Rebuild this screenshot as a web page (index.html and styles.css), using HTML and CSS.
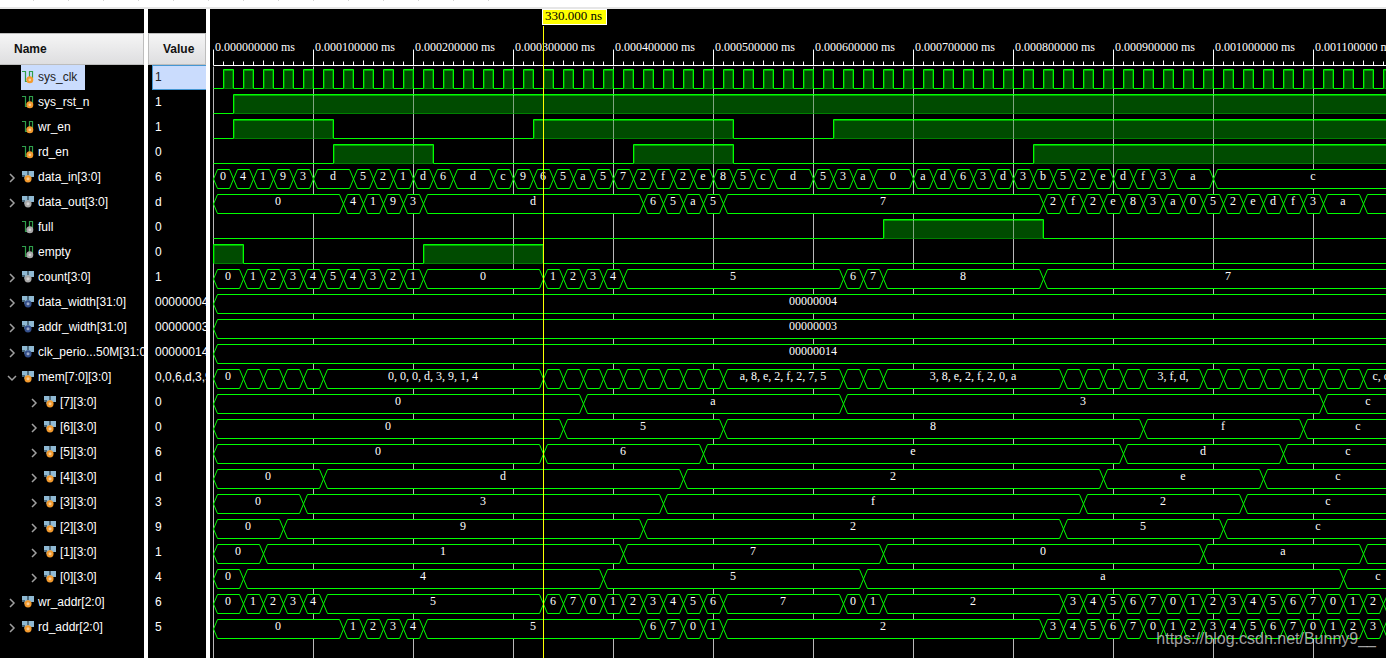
FILE: index.html
```html
<!DOCTYPE html>
<html lang="en">
<head>
<meta charset="utf-8">
<title>Waveform viewer</title>
<link rel="stylesheet" href="styles.css">
</head>
<body>
<svg class="defs" aria-hidden="true">
  <symbol id="bit" viewBox="0 0 14 14">
    <path d="M1 1.500H4.500V11.500H8.500V1.500H11.500V8" fill="none" stroke="#2f9e4b" stroke-width="1.200"/>
    <circle cx="8.800" cy="9.800" r="3.500" fill="currentColor"/>
    <circle cx="8.800" cy="9.800" r="1.400" fill="#fff" opacity=".5"/>
  </symbol>
  <symbol id="bus" viewBox="0 0 14 14">
    <path d="M1 1H6V3H8V1H13V7H10V9H4V7H1Z" fill="#8fb9d3"/>
    <path d="M1 5H4V9H3V7H1ZM6 1H8V5H6Z" fill="#4d6a7c"/>
    <circle cx="7" cy="8.800" r="3.600" fill="currentColor"/>
    <circle cx="7" cy="8.800" r="1.500" fill="#fff" opacity=".5"/>
  </symbol>
</svg>
<div class="viewer">
  <div class="toolbar-edge"></div>
  <main class="panels">
    <section class="column names">
      <h2 class="column-title">Name</h2>
      <div id="names"></div>
    </section>
    <section class="column values">
      <h2 class="column-title">Value</h2>
      <div id="values"></div>
    </section>
    <section class="wave">
      <svg id="wave" class="wave-canvas" role="img" aria-label="Signal waveforms"></svg>
      <span class="cursor-label">330.000 ns</span>
      <span class="watermark">https://blog.csdn.net/Bunny9__</span>
    </section>
  </main>
</div>
<script src="wave.js"></script>
</body>
</html>
```
FILE: styles.css
```css
* {
  box-sizing: border-box;
}

body {
  margin: 0;
  background: #000;
  color: #fff;
  font-family: "Liberation Sans", Arial, sans-serif;
  font-size: 12px;
}

.defs {
  position: absolute;
  width: 0;
  height: 0;
}

.viewer {
  display: flex;
  flex-direction: column;
  height: 100vh;
  overflow: hidden;
}

.toolbar-edge {
  flex: none;
  height: 9px;
  border-bottom: 2px solid #e6e6e6;
  background: repeating-linear-gradient(90deg, transparent 0 33px, #d4d4d4 33px 34px, transparent 34px 35px) 0 0 / 490px 1px no-repeat #fff;
}

.panels {
  display: flex;
  flex: 1;
  min-height: 0;
}

.column {
  flex: none;
  padding-top: 24px;
  border-right: 4px solid #fff;
  overflow: hidden;
}

.names {
  width: 148px;
}

.values {
  width: 62px;
}

.column-title {
  height: 32px;
  margin: 0;
  padding-left: 14px;
  border: 1px solid #bdbdbd;
  border-left: 0;
  background: linear-gradient(#f5f5f5, #dedee0);
  color: #111;
  font-size: 12px;
  line-height: 30px;
}

.values .column-title {
  border-left: 1px solid #bdbdbd;
}

.row {
  display: flex;
  align-items: center;
  height: 25px;
  padding-left: 4px;
  white-space: nowrap;
}

.row.child {
  padding-left: 26px;
}

.expander {
  flex: none;
  display: flex;
  width: 17px;
  height: 16px;
  padding: 3px;
  border: 0;
  background: none;
}

.expander svg {
  width: 10px;
  height: 10px;
  fill: none;
  stroke: #a0a0a0;
  stroke-width: 1.5;
}

.open svg {
  transform: rotate(90deg);
}

.signal {
  display: flex;
  align-items: center;
  gap: 3px;
  height: 25px;
  padding-right: 8px;
  padding-bottom: 1px;
}

.signal svg {
  flex: none;
  width: 14px;
  height: 14px;
}

.in { color: #f39a2d; }
.out { color: #a9a9a9; }
.const { color: #35508c; }

.name {
  color: #fff;
}

.selected .signal {
  background: #cadcfd;
}

.selected .name {
  color: #222;
}

.value {
  height: 25px;
  margin-left: 4px;
  padding-left: 3px;
  line-height: 25px;
  white-space: nowrap;
  overflow: hidden;
}

.value.selected {
  border: 1px solid #4597d3;
  border-right: 0;
  padding-left: 2px;
  background: #cadcfd;
  color: #222;
  line-height: 23px;
}

.wave {
  position: relative;
  flex: 1;
  min-width: 0;
  overflow: hidden;
}

.wave-canvas {
  display: block;
  width: 100%;
  height: 100%;
  font-family: "Liberation Serif", serif;
  font-size: 12px;
}

.cursor-label {
  position: absolute;
  top: 0;
  left: 332px;
  width: 65px;
  height: 16px;
  border: 1px solid #fff;
  padding-left: 2px;
  background: #ff0;
  color: #000;
  font-family: "Liberation Serif", serif;
  font-size: 13px;
  line-height: 12px;
}

.watermark {
  position: absolute;
  right: 10px;
  bottom: 9px;
  color: rgba(215, 215, 215, 0.75);
  font-size: 16px;
  line-height: 20px;
}

.grid { stroke: #b9b9b9; }
.grid-over { stroke: #fff; stroke-opacity: 0.5; }
.ruler { stroke: #fff; fill: none; }
.label { fill: #fff; }
.trace { stroke: #0f0; fill: none; }
.bus-box { stroke: #0f0; fill: #000; }
.high { fill: #004b00; }
.high-edge { fill: none; stroke: #008000; }
.high-top { stroke: #00a800; }
.cursor { stroke: #ff0; }
```
FILE: wave.js
```js
// Times are in nanoseconds; one nanosecond is one pixel.
const END = 1200;
const ORIGIN = 3.5;
const RULER_Y = 56.5;
const ROW = 25;

// A bus is a list of values; each lasts 20 ns unless "*duration" follows it.
// "-" stands for a value too long to be labelled.
const signals = [
  { name: 'sys_clk', kind: 'in', value: '1', clock: 10, selected: true },
  { name: 'sys_rst_n', kind: 'in', value: '1', high: [[20, END]] },
  { name: 'wr_en', kind: 'in', value: '1', high: [[20, 120], [320, 520], [620, END]] },
  { name: 'rd_en', kind: 'in', value: '0', high: [[120, 220], [420, 520], [820, END]] },
  { name: 'data_in[3:0]', kind: 'in', value: '6', bus: '0 4 1 9 3 d*40 5 2 1 d 6 d*40 c 9 6 5 a 5 7 2 f 2 e 8 5 c d*40 5 3 a 0*40 a d 6 3 d 3 b 5 2 e d f 3 a*40 c*200' },
  { name: 'data_out[3:0]', kind: 'out', value: 'd', bus: '0*130 4 1 9 3 d*220 6 5 a 5 7*320 2 f 2 e 8 3 a 0 5 2 e d f 3 a*40 -*50' },
  { name: 'full', kind: 'out', value: '0', high: [[670, 830]] },
  { name: 'empty', kind: 'out', value: '0', high: [[0, 30], [210, 330]] },
  { name: 'count[3:0]', kind: 'out', value: '1', bus: '0*30 1 2 3 4 5 4 3 2 1 0*120 1 2 3 4 5*220 6 7 8*160 7*370' },
  { name: 'data_width[31:0]', kind: 'const', value: '00000004', bus: '00000004*1200' },
  { name: 'addr_width[31:0]', kind: 'const', value: '00000003', bus: '00000003*1200' },
  { name: 'clk_perio...50M[31:0]', kind: 'const', value: '00000014', bus: '00000014*1200' },
  { name: 'mem[7:0][3:0]', kind: 'in', value: '0,0,6,d,3,9,1,4', open: true, bus: '0*30 - - - - 0,0,0,d,3,9,1,4*220 - - - - - - - - - a,8,e,2,f,2,7,5*120 - - 3,8,e,2,f,2,0,a*180 - - - - 3,f,d,*60 - - - - - - - - c,c,c,*50' },
  { name: '[7][3:0]', child: true, kind: 'in', value: '0', bus: '0*370 a*260 3*480 c*90' },
  { name: '[6][3:0]', child: true, kind: 'in', value: '0', bus: '0*350 5*160 8*420 f*160 c*110' },
  { name: '[5][3:0]', child: true, kind: 'in', value: '6', bus: '0*330 6*160 e*420 d*160 c*130' },
  { name: '[4][3:0]', child: true, kind: 'in', value: 'd', bus: '0*110 d*360 2*420 e*160 c*150' },
  { name: '[3][3:0]', child: true, kind: 'in', value: '3', bus: '0*90 3*360 f*420 2*160 c*170' },
  { name: '[2][3:0]', child: true, kind: 'in', value: '9', bus: '0*70 9*360 2*420 5*160 c*190' },
  { name: '[1][3:0]', child: true, kind: 'in', value: '1', bus: '0*50 1*360 7*260 0*320 a*160 -*50' },
  { name: '[0][3:0]', child: true, kind: 'in', value: '4', bus: '0*30 4*360 5*260 a*480 c*70' },
  { name: 'wr_addr[2:0]', kind: 'in', value: '6', bus: '0*30 1 2 3 4 5*220 6 7 0 1 2 3 4 5 6 7*120 0 1 2*180 3 4 5 6 7 0 1 2 3 4 5 6 7 0 1 2 -*30' },
  { name: 'rd_addr[2:0]', kind: 'in', value: '5', bus: '0*130 1 2 3 4 5*220 6 7 0 1 2*320 3 4 5 6 7 0 1 2 3 4 5 6 7 0 1 2 3 -*30' }
];

const chevron = '<svg viewBox="0 0 10 10"><path d="M3 1L7 5L3 9"/></svg>';

document.getElementById('names').innerHTML = signals.map(s => {
  const expander = s.bus
    ? `<button class="expander ${s.open ? 'open' : ''}" aria-label="Toggle ${s.name}">${chevron}</button>`
    : '<span class="expander"></span>';
  return `<div class="row ${s.child ? 'child' : ''} ${s.selected ? 'selected' : ''}">${expander}` +
    `<span class="signal ${s.kind}"><svg><use href="#${s.bus ? 'bus' : 'bit'}"/></svg><span class="name">${s.name}</span></span></div>`;
}).join('');

document.getElementById('values').innerHTML = signals
  .map(s => `<div class="value ${s.selected ? 'selected' : ''}">${s.value}</div>`).join('');

const line = (cls, x1, y1, x2, y2) => `<path class="${cls}" d="M${x1} ${y1}L${x2} ${y2}"/>`;
const px = t => ORIGIN + t;

function drawBit(s, top, bottom) {
  const spans = s.high || Array.from({ length: END / 20 }, (_, i) => [i * 20 + s.clock, i * 20 + 20]);
  let out = '';
  let d = `M${px(0)} ${bottom}`;
  for (const [from, to] of spans) {
    out += `<rect class="high" x="${px(from)}" y="${top}" width="${to - from}" height="${bottom - top}"/>`;
    // The baseline stays dim beneath a high level.
    out += `<path class="high-edge" d="M${px(from) + 1} ${bottom}V${top + 1}H${px(to) - 1}V${bottom}Z"/>`;
    out += line('high-top', px(from), top + 1, px(to), top + 1);
    for (let t = Math.ceil(from / 100) * 100; t <= to; t += 100) {
      out += line('grid-over', px(t), top, px(t), bottom);
    }
    d += from ? `H${px(from)}V${top}` : `V${top}`;
    d += `H${px(to)}V${bottom}`;
  }
  if (spans[spans.length - 1][1] < END) d += `H${px(END)}`;
  return out + `<path class="trace" d="${d}"/>`;
}

function drawBus(s, top, bottom) {
  const mid = (top + bottom) / 2;
  let t = 0;
  let out = '';
  for (const token of s.bus.split(' ')) {
    const [text, length] = token.split('*');
    const end = t + Number(length || 20);
    const a = px(t);
    const b = px(end);
    out += `<path class="bus-box" d="M${a} ${mid}L${a + 4} ${top}H${b - 4}L${b} ${mid}L${b - 4} ${bottom}H${a + 4}Z"/>`;
    if (text !== '-') {
      out += `<text class="label" text-anchor="middle" x="${Math.floor((a + b) / 2)}" y="${top + 10.5}">${text.replace(/,/g, ', ').trim()}</text>`;
    }
    t = end;
  }
  return out;
}

let svg = line('ruler', px(0), RULER_Y, px(END), RULER_Y);
for (let t = 0; t < END; t += 10) {
  const height = t % 100 === 0 ? 16 : t % 50 === 0 ? 5 : 4;
  svg += line('ruler', px(t), RULER_Y - height, px(t), RULER_Y);
}
for (let t = 0; t < END; t += 100) {
  svg += `<text class="label" x="${px(t) + 1.5}" y="42">${(t / 1e6).toFixed(9)} ms</text>`;
  svg += line('grid', px(t), RULER_Y + 1, px(t), 2000);
}
signals.forEach((s, i) => {
  const top = RULER_Y + 4 + i * ROW;
  svg += (s.bus ? drawBus : drawBit)(s, top, top + 19);
});
svg += line('cursor', px(330), 17, px(330), 2000);
document.getElementById('wave').innerHTML = svg;
```
